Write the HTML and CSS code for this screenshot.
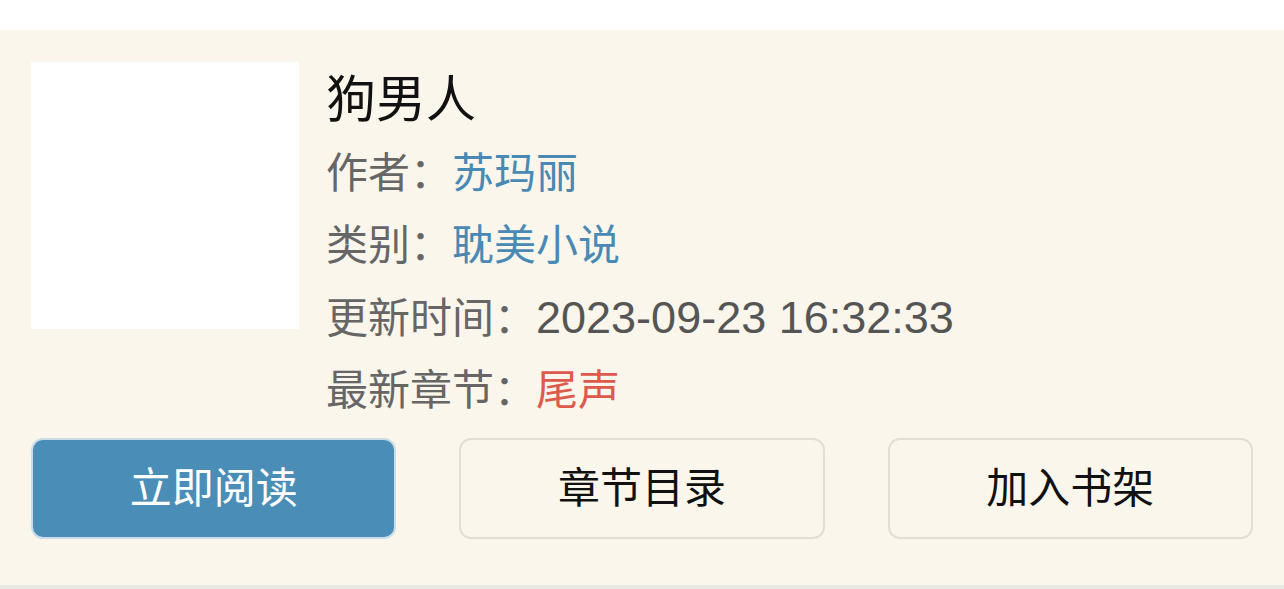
FILE: index.html
```html
<!DOCTYPE html>
<html>
<head>
    <meta charset="utf-8">
    <title>狗男人</title>
    <link rel="stylesheet" href="styles.css">
</head>
<body>
    <div class="top-bar"></div>

    <div class="book-box">
        <div class="book-main">
            <div class="book-cover"></div>
            <div class="book-info">
                <h1 class="book-title">狗男人</h1>
                <p class="info-row">作者：<a class="link">苏玛丽</a></p>
                <p class="info-row">类别：<a class="link">耽美小说</a></p>
                <p class="info-row">更新时间：<span class="time">2023-09-23 16:32:33</span></p>
                <p class="info-row">最新章节：<a class="link red">尾声</a></p>
            </div>
        </div>

        <div class="book-btns">
            <a class="btn btn-primary">立即阅读</a>
            <a class="btn">章节目录</a>
            <a class="btn">加入书架</a>
        </div>
    </div>
</body>
</html>
```

FILE: styles.css
```css
body {
    margin: 0;
    background: #fff;
    font-family: "Liberation Sans", "Noto Sans CJK SC", sans-serif;
}
.top-bar { height: 30px; background: #fff; }
.book-box {
    background: #faf6ec;
    padding: 32px 31px 46px;
    border-bottom: 5px solid #e9e8e5;
}
.book-main { display: flex; }
.book-cover {
    width: 268px;
    height: 267px;
    background: #fff;
    flex-shrink: 0;
}
.book-info { margin-left: 27px; }
.book-title {
    margin: 0;
    font-size: 50px;
    font-weight: normal;
    line-height: 76px;
    color: #111;
}
.info-row {
    margin: 0;
    font-size: 42px;
    line-height: 72px;
    color: #666;
}
.link { color: #4a89b4; }
.red { color: #dd5a4d; }
.time {
    color: #555;
    font-size: 45px;
}
.book-btns {
    display: grid;
    grid-template-columns: repeat(3, 1fr);
    gap: 63px;
    margin-top: 11px;
}
.btn {
    height: 97px;
    line-height: 97px;
    text-align: center;
    font-size: 42px;
    color: #111;
    border: 2px solid #e2ded6;
    border-radius: 12px;
    background: #faf6ec;
}
.btn-primary {
    background: #4a8db7;
    color: #fff;
    border-color: #c9dce8;
}
```
